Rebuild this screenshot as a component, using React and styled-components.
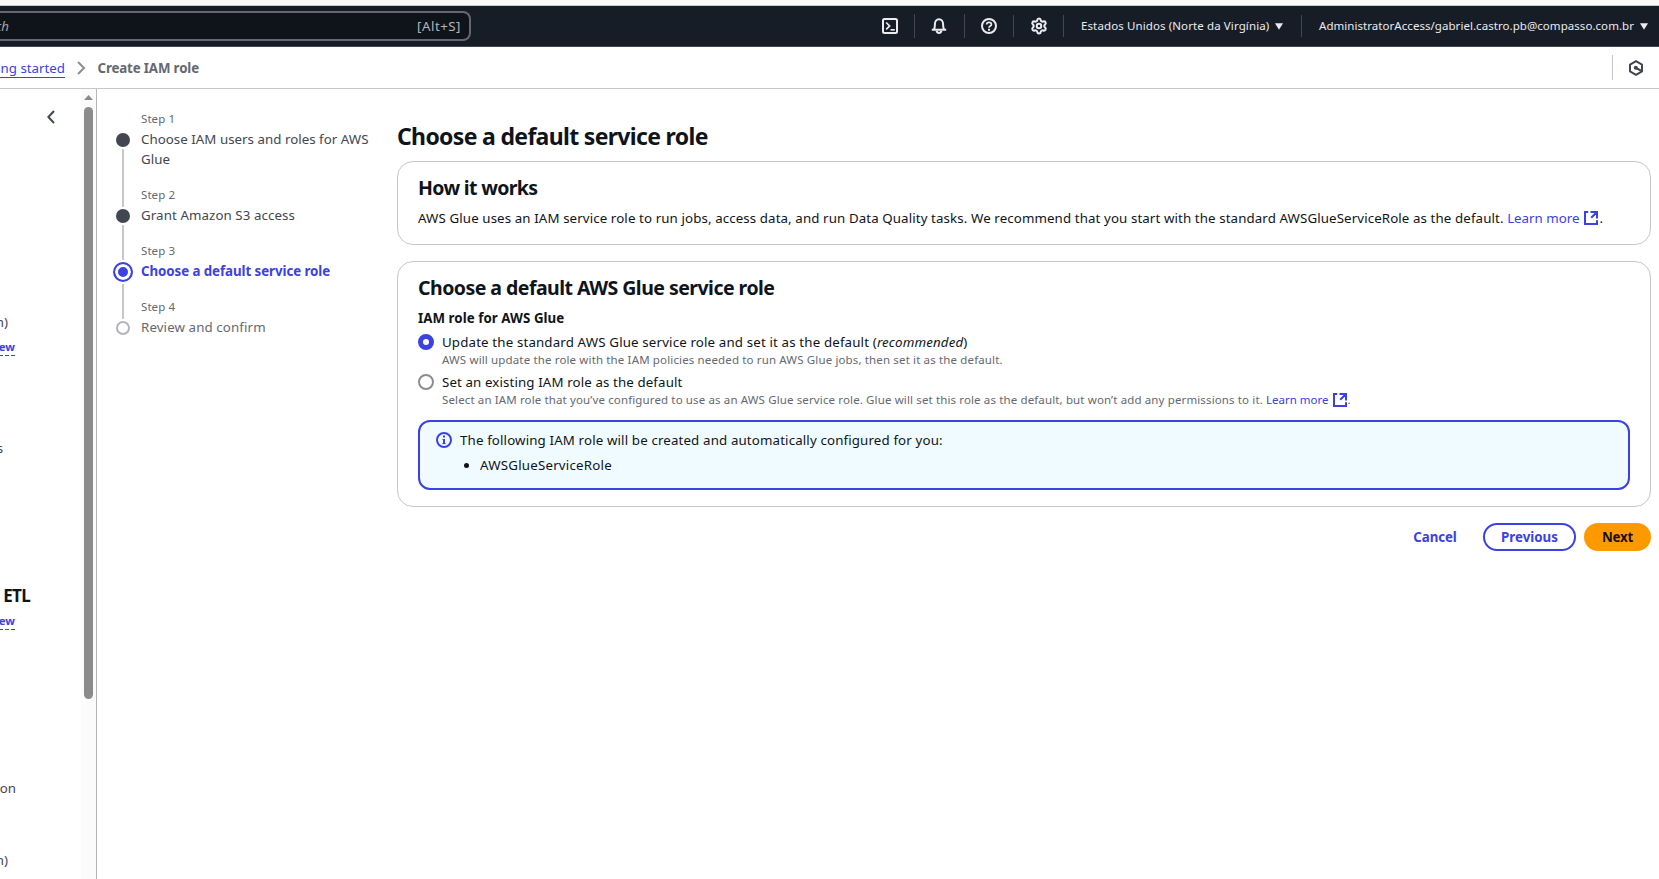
import React from "react";
import styled, { createGlobalStyle, css } from "styled-components";
import { Settings } from "lucide-react";

const blue = "#3b41e3";
const ink = "#0f141a";
const muted = "#656871";
const line = "#c6c6cd";

const GlobalStyle = createGlobalStyle`
  * { box-sizing: border-box; }
  body {
    margin: 0;
    background: #fff;
    color: ${ink};
    font-family: "Noto Sans", "Open Sans", sans-serif;
    font-size: 13.3px;
    line-height: 20px;
    overflow: hidden;
  }
  h1, h2, p, ul { margin: 0; }
`;

const tracked = css`
  letter-spacing: ${(p) => p.$track || 0}px;
`;

const Page = styled.div`
  height: 879px;
  display: flex;
  flex-direction: column;
  overflow: hidden;
`;

const BrowserEdge = styled.div`
  flex: none;
  height: 6px;
  background: #fafafa;
  border-bottom: 1px solid #c3d0c6;
`;

/* ---------- Top navigation ---------- */

const TopNav = styled.header`
  flex: none;
  height: 41px;
  display: flex;
  align-items: flex-start;
  background: #161d27;
  border-bottom: 1px solid #424650;
  color: #ebebf0;
`;

const Search = styled.div`
  width: 471px;
  height: 30px;
  margin-top: 5px;
  padding-right: 8px;
  display: flex;
  align-items: center;
  justify-content: space-between;
  background: ${ink};
  border: 2px solid #656871;
  border-left: 0;
  border-radius: 0 8px 8px 0;
  color: #b4b4bb;
`;

const SearchHint = styled.span`
  width: 9px;
  display: flex;
  justify-content: flex-end;
  overflow: hidden;
  font-style: italic;
  color: #a4a4ad;
`;

const Shortcut = styled.span`
  ${tracked}
`;

const NavTools = styled.div`
  margin-left: auto;
  height: 40px;
  display: flex;
  align-items: center;
`;

const NavCell = styled.div`
  width: ${(p) => p.$w}px;
  padding: 0 ${(p) => p.$end || 0}px 0 ${(p) => p.$start || 0}px;
  display: flex;
  align-items: center;
  justify-content: center;
`;

const NavMenu = styled.div`
  width: ${(p) => p.$w}px;
  padding: 0 ${(p) => p.$end}px 0 17px;
  display: flex;
  align-items: center;
  justify-content: space-between;
  font-size: 11.5px;
  white-space: nowrap;
  ${tracked}
`;

const NavDivider = styled.span`
  width: 1px;
  height: ${(p) => p.$h || 22}px;
  background: #424650;
`;

/* ---------- Breadcrumb bar ---------- */

const CrumbBar = styled.div`
  flex: none;
  height: 42px;
  display: flex;
  align-items: center;
  border-bottom: 1px solid ${line};
`;

const CrumbLink = styled.a`
  width: 65px;
  height: 20px;
  display: flex;
  justify-content: flex-end;
  overflow: hidden;
  white-space: nowrap;
  color: ${blue};
  border-bottom: 1px solid ${blue};
  line-height: 20px;
  ${tracked}
`;

const CrumbArrow = styled.span`
  width: 32.5px;
  padding-left: 12px;
  display: flex;
`;

const CrumbCurrent = styled.span`
  font-weight: 700;
  color: ${muted};
  ${tracked}
`;

const CrumbTools = styled.div`
  margin-left: auto;
  padding: 0 16px;
  height: 25px;
  display: flex;
  align-items: center;
  border-left: 1px solid ${line};
`;

/* ---------- Body ---------- */

const Body = styled.div`
  flex: 1;
  min-height: 0;
  display: flex;
`;

const Sidebar = styled.aside`
  width: 97px;
  display: flex;
  border-right: 1px solid #b4b4bb;
`;

const SideList = styled.div`
  width: 81px;
  display: flex;
  flex-direction: column;
  overflow: hidden;
`;

const Collapse = styled.div`
  flex: none;
  height: 56px;
  padding-left: 47px;
  display: flex;
  align-items: center;
`;

const SideText = styled.div`
  flex: none;
  width: ${(p) => p.$w}px;
  height: 20px;
  margin-top: ${(p) => p.$mt}px;
  display: flex;
  justify-content: flex-end;
  color: #424650;
`;

const SideTitle = styled(SideText)`
  height: 24px;
  line-height: 25px;
  font-size: 17px;
  font-weight: 700;
  letter-spacing: -0.7px;
  color: ${ink};
`;

const SideBadge = styled(SideText)`
  height: 18px;
  font-size: 11.3px;
  line-height: 18px;
  font-weight: 700;
  color: ${blue};
  background: repeating-linear-gradient(to left, ${blue} 0 4px, transparent 4px 6px) bottom / 100% 1px no-repeat;
`;

const ScrollTrack = styled.div`
  width: 15px;
  padding: 6px 3px 0;
  background: #fbfbfb;
  display: flex;
  flex-direction: column;
`;

const ScrollThumb = styled.div`
  width: 9px;
  height: 592px;
  margin-top: 7px;
  border-radius: 5px;
  background: #8b8b8b;
`;

/* ---------- Wizard steps ---------- */

const Steps = styled.nav`
  width: 300px;
  padding: 20px 0 0 16px;
  display: flex;
  flex-direction: column;
`;

const StepItem = styled.div`
  display: flex;
  gap: 8px;
`;

const Rail = styled.div`
  width: 20px;
  display: flex;
  flex-direction: column;
  align-items: center;
`;

const RailTop = styled.span`
  width: 2px;
  height: ${(p) => (p.$active ? 19 : 22)}px;
  background: ${(p) => (p.$hidden ? "transparent" : line)};
`;

const RailBottom = styled(RailTop)`
  flex: 1;
  height: auto;
`;

const Marker = styled.span`
  width: 14px;
  height: 14px;
  margin: 2px 0;
  border-radius: 50%;
  ${(p) =>
    p.$state === "done" &&
    css`
      background: #424650;
    `}
  ${(p) =>
    p.$state === "active" &&
    css`
      width: 20px;
      height: 20px;
      border: 2px solid ${blue};
      background: ${blue};
      box-shadow: inset 0 0 0 3px #fff;
    `}
  ${(p) =>
    p.$state === "todo" &&
    css`
      border: 2px solid #b4b4bb;
    `}
`;

const StepText = styled.div`
  width: 240px;
  padding-bottom: 16px;
`;

const StepLabel = styled.div`
  font-size: 11.5px;
  letter-spacing: 0.08px;
  color: ${muted};
`;

const StepTitle = styled.div`
  color: ${(p) => ({ done: "#424650", active: blue, todo: muted })[p.$state]};
  font-weight: ${(p) => (p.$state === "active" ? 700 : 400)};
  ${tracked}
`;

/* ---------- Main content ---------- */

const Main = styled.main`
  width: 1254px;
  padding-top: 32px;
`;

const PageTitle = styled.h1`
  margin-bottom: 10px;
  font-size: 23px;
  line-height: 30px;
  font-weight: 700;
  letter-spacing: -0.67px;
`;

const Card = styled.section`
  margin-bottom: 16px;
  padding: 14px 20px 16px;
  border: 1px solid ${line};
  border-radius: 16px;
`;

const CardTitle = styled.h2`
  margin-bottom: 8px;
  font-size: 19.5px;
  line-height: 24px;
  font-weight: 700;
  ${tracked}
`;

const Paragraph = styled.p`
  height: 20px;
  white-space: nowrap;
  ${tracked}
`;

const Link = styled.a`
  color: ${blue};
  ${tracked}
`;

const ExternalSvg = styled.svg`
  margin-left: ${(p) => p.$gap}px;
  margin-right: 1px;
  vertical-align: ${(p) => p.$shift}px;
`;

const FieldLabel = styled.div`
  margin-bottom: 4px;
  font-weight: 700;
  ${tracked}
`;

const RadioOption = styled.div`
  display: flex;
  gap: 8px;
  margin-bottom: ${(p) => p.$mb}px;
`;

const RadioDot = styled.span`
  flex: none;
  width: 16px;
  height: 16px;
  margin-top: 2px;
  border-radius: 50%;
  border: ${(p) => (p.$on ? `5px solid ${blue}` : "2px solid #8c8c94")};
  background: #fff;
`;

const RadioLabel = styled.div`
  height: 20px;
  white-space: nowrap;
  ${tracked}
`;

const RadioHelp = styled.div`
  height: 16px;
  font-size: 11.5px;
  line-height: 16px;
  color: ${muted};
  white-space: nowrap;
  ${tracked}
`;

const Alert = styled.div`
  height: 70px;
  padding: 8px 16px;
  display: flex;
  gap: 8px;
  border: 2px solid ${blue};
  border-radius: 12px;
  background: #f0fbff;
`;

const AlertIcon = styled.svg`
  flex: none;
  margin-top: 2px;
`;

const AlertText = styled.div`
  letter-spacing: 0.14px;
`;

const AlertList = styled.ul`
  margin-top: 5px;
  padding-left: 20px;
  letter-spacing: 0.21px;
`;

const Actions = styled.div`
  display: flex;
  justify-content: flex-end;
  gap: 8px;
`;

const Button = styled.button`
  width: ${(p) => p.$w}px;
  height: 28px;
  padding: 0;
  border-radius: 14px;
  border: 2px solid transparent;
  background: transparent;
  font: 700 13.3px/20px "Noto Sans", sans-serif;
  color: ${blue};
  ${tracked}
  ${(p) =>
    p.$kind === "outline" &&
    css`
      border-color: ${blue};
    `}
  ${(p) =>
    p.$kind === "primary" &&
    css`
      background: #ff9900;
      border-color: #ff9900;
      color: ${ink};
    `}
`;

/* ---------- Icons ---------- */

const Caret = () => (
  <svg width="8" height="7" viewBox="0 0 8 7">
    <path d="M0 .3h8L4 6.8z" fill="#ebebf0" />
  </svg>
);

const iconProps = { width: 16, height: 16, viewBox: "0 0 16 16", fill: "none", stroke: "#ebebf0", strokeWidth: 2 };

const TerminalIcon = () => (
  <svg {...iconProps}>
    <rect x="1" y="1" width="14" height="14" rx="1.5" />
    <path d="M4.2 4.5 7.6 8l-3.4 3.4" strokeWidth="1.7" />
    <path d="M8.5 11.8h4.3" strokeWidth="1.6" />
  </svg>
);

const BellIcon = () => (
  <svg {...iconProps}>
    <path d="M.8 11.8h14.4M2.8 11.6C4 10.2 3.9 9 3.9 6.2 3.9 3.4 5.6 1.2 8 1.2s4.1 2.2 4.1 5c0 2.8-.1 4 1.1 5.4" />
    <path d="M5.6 12.8c.3 1.5 1.2 2.2 2.4 2.2s2.1-.7 2.4-2.2" />
  </svg>
);

const HelpIcon = () => (
  <svg {...iconProps}>
    <circle cx="8" cy="8" r="7" />
    <path d="M5.6 6.5C5.7 5 6.7 4.300 8 4.300s2.400.8 2.400 2.100C10.400 8 8 8 8 9.800" strokeWidth="1.7" />
    <path d="M8 10.8v1.9" />
  </svg>
);

const HexIcon = () => (
  <svg width="14" height="16" viewBox="0 0 14 16" fill="none" stroke="#424650" strokeWidth="2">
    <path d="M7 1.2 13 4.6v6.800L7 14.800 1 11.400V4.600z" strokeLinejoin="round" />
    <circle cx="6.8" cy="7.8" r="2" fill="#424650" stroke="none" />
    <path d="M7 8l5 2.7" />
  </svg>
);

const External = ({ gap, shift }) => (
  <ExternalSvg $gap={gap} $shift={shift} width="14" height="14" viewBox="0 0 14 14" fill="none" stroke={blue} strokeWidth="2">
    <path d="M4.2 1H1v12h12V9.2M6.5 1H13v6.5M12.8 1.2 7.2 6.8" />
  </ExternalSvg>
);

/* ---------- Data ---------- */

const steps = [
  { title: "Choose IAM users and roles for AWS Glue", state: "done", track: 0.03 },
  { title: "Grant Amazon S3 access", state: "done", track: 0.09 },
  { title: "Choose a default service role", state: "active", track: -0.06 },
  { title: "Review and confirm", state: "todo", track: 0.11 },
];

export default function App() {
  return (
    <Page>
      <GlobalStyle />
      <BrowserEdge />
      <TopNav>
        <Search>
          <SearchHint>ch</SearchHint>
          <Shortcut $track={0.5}>[Alt+S]</Shortcut>
        </Search>
        <NavTools>
          <NavCell $w={49}><TerminalIcon /></NavCell>
          <NavDivider $h={24} />
          <NavCell $w={49} $end={1}><BellIcon /></NavCell>
          <NavDivider $h={24} />
          <NavCell $w={48}><HelpIcon /></NavCell>
          <NavDivider />
          <NavCell $w={49} $start={1}><Settings size={18} color="#ebebf0" strokeWidth={2.7} /></NavCell>
          <NavDivider />
          <NavMenu $w={237} $end={18} $track={0.11}>
            Estados Unidos (Norte da Virgínia)
            <Caret />
          </NavMenu>
          <NavDivider />
          <NavMenu $w={357} $end={11} $track={0.05}>
            AdministratorAccess/gabriel.castro.pb@compasso.com.br
            <Caret />
          </NavMenu>
        </NavTools>
      </TopNav>

      <CrumbBar>
        <CrumbLink>ng started</CrumbLink>
        <CrumbArrow>
          <svg width="9" height="14" viewBox="0 0 9 14" fill="none" stroke="#8c8c94" strokeWidth="2">
            <path d="M1 1l6 6-6 6" />
          </svg>
        </CrumbArrow>
        <CrumbCurrent $track={-0.14}>Create IAM role</CrumbCurrent>
        <CrumbTools><HexIcon /></CrumbTools>
      </CrumbBar>

      <Body>
        <Sidebar>
          <SideList>
            <Collapse>
              <svg width="8" height="14" viewBox="0 0 8 14" fill="none" stroke="#424650" strokeWidth="2">
                <path d="M7 1L1.3 7 7 13" />
              </svg>
            </Collapse>
            <SideText $w={8} $mt={167}>n)</SideText>
            <SideBadge $w={15} $mt={6}>ew</SideBadge>
            <SideText $w={3} $mt={82}>s</SideText>
            <SideTitle $w={30} $mt={125}>ETL</SideTitle>
            <SideBadge $w={15} $mt={5}>ew</SideBadge>
            <SideText $w={16} $mt={148}>on</SideText>
            <SideText $w={8} $mt={52}>n)</SideText>
          </SideList>
          <ScrollTrack>
            <svg width="9" height="5" viewBox="0 0 9 5">
              <path d="M4.5 0L9 5H0z" fill="#8b8b8b" />
            </svg>
            <ScrollThumb />
          </ScrollTrack>
        </Sidebar>

        <Steps>
          {steps.map((s, i) => (
            <StepItem key={s.title}>
              <Rail>
                <RailTop $active={s.state === "active"} $hidden={i === 0} />
                <Marker $state={s.state} />
                <RailBottom $hidden={i === steps.length - 1} />
              </Rail>
              <StepText>
                <StepLabel>Step {i + 1}</StepLabel>
                <StepTitle $state={s.state} $track={s.track}>{s.title}</StepTitle>
              </StepText>
            </StepItem>
          ))}
        </Steps>

        <Main>
          <PageTitle>Choose a default service role</PageTitle>
          <Card>
            <CardTitle $track={-0.66}>How it works</CardTitle>
            <Paragraph $track={0.105}>
              AWS Glue uses an IAM service role to run jobs, access data, and run Data Quality tasks. We recommend that
              you start with the standard AWSGlueServiceRole as the default.{" "}
              <Link>
                Learn more
                <External gap={5} shift={-2} />
              </Link>
              .
            </Paragraph>
          </Card>

          <Card>
            <CardTitle $track={-0.53}>Choose a default AWS Glue service role</CardTitle>
            <FieldLabel $track={0.06}>IAM role for AWS Glue</FieldLabel>
            <RadioOption $mb={4}>
              <RadioDot $on />
              <div>
                <RadioLabel $track={0.15}>
                  Update the standard AWS Glue service role and set it as the default (<em>recommended</em>)
                </RadioLabel>
                <RadioHelp $track={0.142}>
                  AWS will update the role with the IAM policies needed to run AWS Glue jobs, then set it as the
                  default.
                </RadioHelp>
              </div>
            </RadioOption>
            <RadioOption $mb={12}>
              <RadioDot />
              <div>
                <RadioLabel $track={0.115}>Set an existing IAM role as the default</RadioLabel>
                <RadioHelp $track={0.13}>
                  Select an IAM role that you’ve configured to use as an AWS Glue service role. Glue will set this role
                  as the default, but won’t add any permissions to it.{" "}
                  <Link>
                    Learn more
                    <External gap={4} shift={-3} />
                  </Link>
                  .
                </RadioHelp>
              </div>
            </RadioOption>
            <Alert>
              <AlertIcon width="16" height="16" viewBox="0 0 16 16" fill="none" stroke={blue} strokeWidth="2">
                <circle cx="8" cy="8" r="7" />
                <path d="M8 3.5v2M8 7v5" />
                <path d="M6.5 7.5H8M6.3 11.6h3.4" strokeWidth="1" />
              </AlertIcon>
              <AlertText>
                The following IAM role will be created and automatically configured for you:
                <AlertList>
                  <li>AWSGlueServiceRole</li>
                </AlertList>
              </AlertText>
            </Alert>
          </Card>

          <Actions>
            <Button $w={80} $track={-0.1}>Cancel</Button>
            <Button $w={93} $kind="outline" $track={0.02}>Previous</Button>
            <Button $w={67} $kind="primary" $track={-0.2}>Next</Button>
          </Actions>
        </Main>
      </Body>
    </Page>
  );
}
